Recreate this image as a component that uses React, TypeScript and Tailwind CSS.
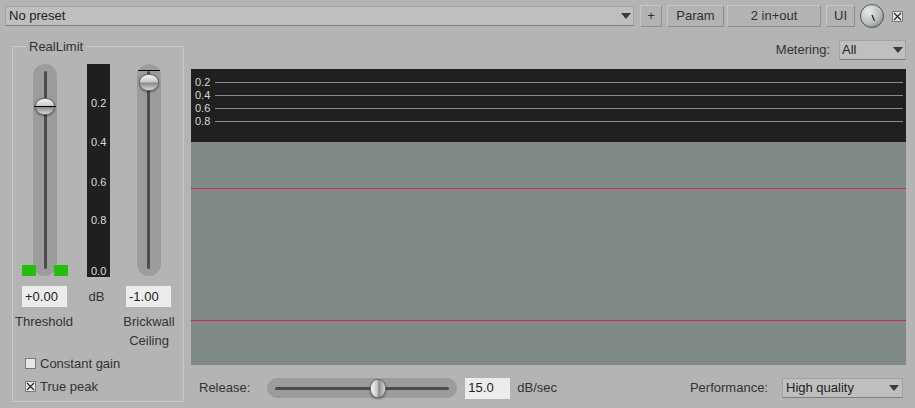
import React from 'react';

const font = { fontFamily: '"Liberation Sans", Arial, sans-serif' };

function Arrow() {
  return (
    <svg width="10" height="6" viewBox="0 0 10 6" className="shrink-0">
      <path d="M0 0 L10 0 L5 6 Z" fill="#3a3a3a" />
    </svg>
  );
}

function Btn({ children, w }: { children: React.ReactNode; w: string }) {
  return (
    <div
      className={`${w} h-[22px] flex items-center justify-center border border-t-[#c6c6c6] border-l-[#c6c6c6] border-b-[#8e8e8e] border-r-[#8e8e8e] bg-[#b3b3b3] text-[13px] text-[#303030]`}
    >
      {children}
    </div>
  );
}

function Thumb({ line }: { line: 'h' | 'top' }) {
  return (
    <div className="relative w-[22px] h-[18px] flex items-center justify-center">
      <div className="w-[20px] h-[17px] rounded-[45%] border border-[#6a6a6a] bg-[linear-gradient(#f4f4f4,#c8c8c8_45%,#8a8a8a_55%,#d6d6d6)] shadow-[0_1px_2px_rgba(0,0,0,0.4)]" />
      {line === 'h' ? (
        <div className="absolute left-0 right-0 top-1/2 h-px bg-black" />
      ) : (
        <div className="absolute left-0 right-0 -top-[3px] h-px bg-black" />
      )}
    </div>
  );
}

function VSlider({ thumbTop, line, green }: { thumbTop: number; line: 'h' | 'top'; green?: boolean }) {
  return (
    <div className="relative w-[24px] h-[212px] rounded-full bg-[#9c9c9c] flex justify-center">
      <div className="mt-[7px] mb-[7px] w-[3px] bg-[#4d4d4d] rounded" />
      <div className="absolute left-[1px]" style={{ top: thumbTop }}>
        <Thumb line={line} />
      </div>
      {green && (
        <>
          <div className="absolute -left-[11px] bottom-0 w-[14px] h-[11px] bg-[#22c00c]" />
          <div className="absolute -right-[11px] bottom-0 w-[14px] h-[11px] bg-[#22c00c]" />
        </>
      )}
    </div>
  );
}

function Check({ checked }: { checked?: boolean }) {
  return (
    <div className="w-[11px] h-[11px] border border-[#7a7a7a] bg-[#e6e6e6] flex items-center justify-center">
      {checked && (
        <svg width="9" height="9" viewBox="0 0 9 9">
          <path d="M1 1 L8 8 M8 1 L1 8" stroke="#222" strokeWidth="1.1" />
        </svg>
      )}
    </div>
  );
}

function Field({ value, w }: { value: string; w: string }) {
  return (
    <div className={`${w} h-[21px] bg-[#ececec] flex items-center px-[3px] text-[13px] text-[#222]`}>
      {value}
    </div>
  );
}

export default function App() {
  const meterLabels = ['0.2', '0.4', '0.6', '0.8'];
  return (
    <div className="w-[915px] h-[408px] bg-[#b4b4b4] overflow-hidden text-[#333]" style={font}>
      {/* top bar */}
      <div className="flex items-center h-[22px] mt-[5px] pl-[5px]">
        <div className="w-[629px] h-[20px] bg-[#bfbfbf] border border-[#a2a2a2] border-b-[#7e7e7e] flex items-center justify-between pl-[3px] pr-[2px] text-[13px] text-[#222]">
          <span>No preset</span>
          <Arrow />
        </div>
        <div className="ml-[6px]"><Btn w="w-[22px]">+</Btn></div>
        <div className="ml-[5px]"><Btn w="w-[57px]">Param</Btn></div>
        <div className="ml-[3px]"><Btn w="w-[94px]">2 in+out</Btn></div>
        <div className="ml-[5px]"><Btn w="w-[29px]">UI</Btn></div>
        <svg width="26" height="26" viewBox="0 0 26 26" className="ml-[4px]">
          <defs>
            <radialGradient id="kg" cx="35%" cy="30%" r="75%">
              <stop offset="0" stopColor="#e8ecec" />
              <stop offset="0.7" stopColor="#b8bcbc" />
              <stop offset="1" stopColor="#8a8e8e" />
            </radialGradient>
          </defs>
          <circle cx="13" cy="13" r="11.5" fill="url(#kg)" stroke="#555" strokeWidth="1" />
          <path d="M13 12 L15.5 18" stroke="#222" strokeWidth="1.2" />
        </svg>
        <div className="ml-[7px]"><Check checked /></div>
      </div>

      {/* main */}
      <div className="flex mt-[12px]">
        <fieldset className="ml-[12px] w-[172px] h-[363px] border border-[#c9c9c9] pl-[9px]">
          <legend className="ml-[4px] px-[3px] text-[13px] text-[#303030] leading-[15px]">RealLimit</legend>
          <div className="flex mt-[10px]">
            <div className="w-[46px] flex justify-center">
              <VSlider thumbTop={33} line="h" green />
            </div>
            <div className="ml-[19px] w-[23px] h-[213px] bg-[#1f1f1f] relative text-[11px] text-[#dcdcdc]">
              <span className="absolute left-[4px] top-[31px]">0.2</span>
              <span className="absolute left-[4px] top-[70px]">0.4</span>
              <span className="absolute left-[4px] top-[110px]">0.6</span>
              <span className="absolute left-[4px] top-[148px]">0.8</span>
              <span className="absolute left-[4px] top-[199px]">0.0</span>
            </div>
            <div className="ml-[16px] w-[45px] flex justify-center">
              <VSlider thumbTop={9} line="top" />
            </div>
          </div>
          <div className="flex items-center mt-[9px]">
            <Field value="+0.00" w="w-[45px]" />
            <div className="w-[59px] text-center text-[13px] text-[#333]">dB</div>
            <Field value="-1.00" w="w-[45px]" />
          </div>
          <div className="flex mt-[5px] text-[13px] text-[#333] leading-[19px]">
            <div className="w-[58px] -ml-[7px] text-center">Threshold</div>
            <div className="ml-[46px] w-[60px] text-center">Brickwall<br />Ceiling</div>
          </div>
          <div className="flex items-center gap-[4px] mt-[4px] ml-[3px] text-[13px] text-[#333]">
            <Check />
            <span>Constant gain</span>
          </div>
          <div className="flex items-center gap-[4px] mt-[3px] ml-[3px] text-[13px] text-[#333]">
            <Check checked />
            <span>True peak</span>
          </div>
        </fieldset>

        <div className="ml-[7px] w-[715px] flex flex-col">
          <div className="flex items-center justify-end h-[20px] mt-[1px]">
            <span className="text-[13px] text-[#333] mr-[9px]">Metering:</span>
            <div className="w-[67px] h-[20px] bg-[#bfbfbf] border border-[#a2a2a2] border-b-[#7e7e7e] flex items-center justify-between pl-[2px] pr-[2px] text-[13px] text-[#222]">
              <span>All</span>
              <Arrow />
            </div>
          </div>
          <div className="mt-[9px] h-[73px] bg-[#202020] pt-[8px] flex flex-col gap-[3px]">
            {meterLabels.map((l) => (
              <div key={l} className="flex items-center h-[10px]">
                <span className="w-[24px] pl-[4px] text-[11px] leading-[10px] text-[#d8d8d8]">{l}</span>
                <div className="flex-1 h-px bg-[#8c8c8c] mr-[3px]" />
              </div>
            ))}
          </div>
          <div className="h-[223px] bg-[#808a87] pt-[46px]">
            <div className="h-[1px] bg-[#c42a5c]" />
            <div className="h-[1px] bg-[#c42a5c] mt-[131px]" />
          </div>
          <div className="flex items-center mt-[12px] h-[22px] text-[13px] text-[#333]">
            <span className="ml-[8px]">Release:</span>
            <div className="ml-[17px] relative w-[190px] h-[20px] rounded-full bg-[#9c9c9c] flex items-center">
              <div className="ml-[8px] w-[174px] h-[3px] bg-[#4d4d4d] rounded" />
              <div className="absolute left-[103px] top-[1px] w-[16px] h-[19px] rounded-[45%] border border-[#6a6a6a] bg-[linear-gradient(90deg,#f4f4f4,#c8c8c8_45%,#8a8a8a_55%,#d6d6d6)] shadow-[0_1px_2px_rgba(0,0,0,0.4)]" />
            </div>
            <div className="ml-[8px]"><Field value="15.0" w="w-[45px]" /></div>
            <span className="ml-[7px]">dB/sec</span>
            <span className="ml-auto mr-[14px]">Performance:</span>
            <div className="mr-[3px] w-[121px] h-[20px] bg-[#bfbfbf] border border-[#a2a2a2] border-b-[#7e7e7e] flex items-center justify-between pl-[3px] pr-[3px] text-[13px] text-[#222]">
              <span>High quality</span>
              <Arrow />
            </div>
          </div>
        </div>
      </div>
    </div>
  );
}
